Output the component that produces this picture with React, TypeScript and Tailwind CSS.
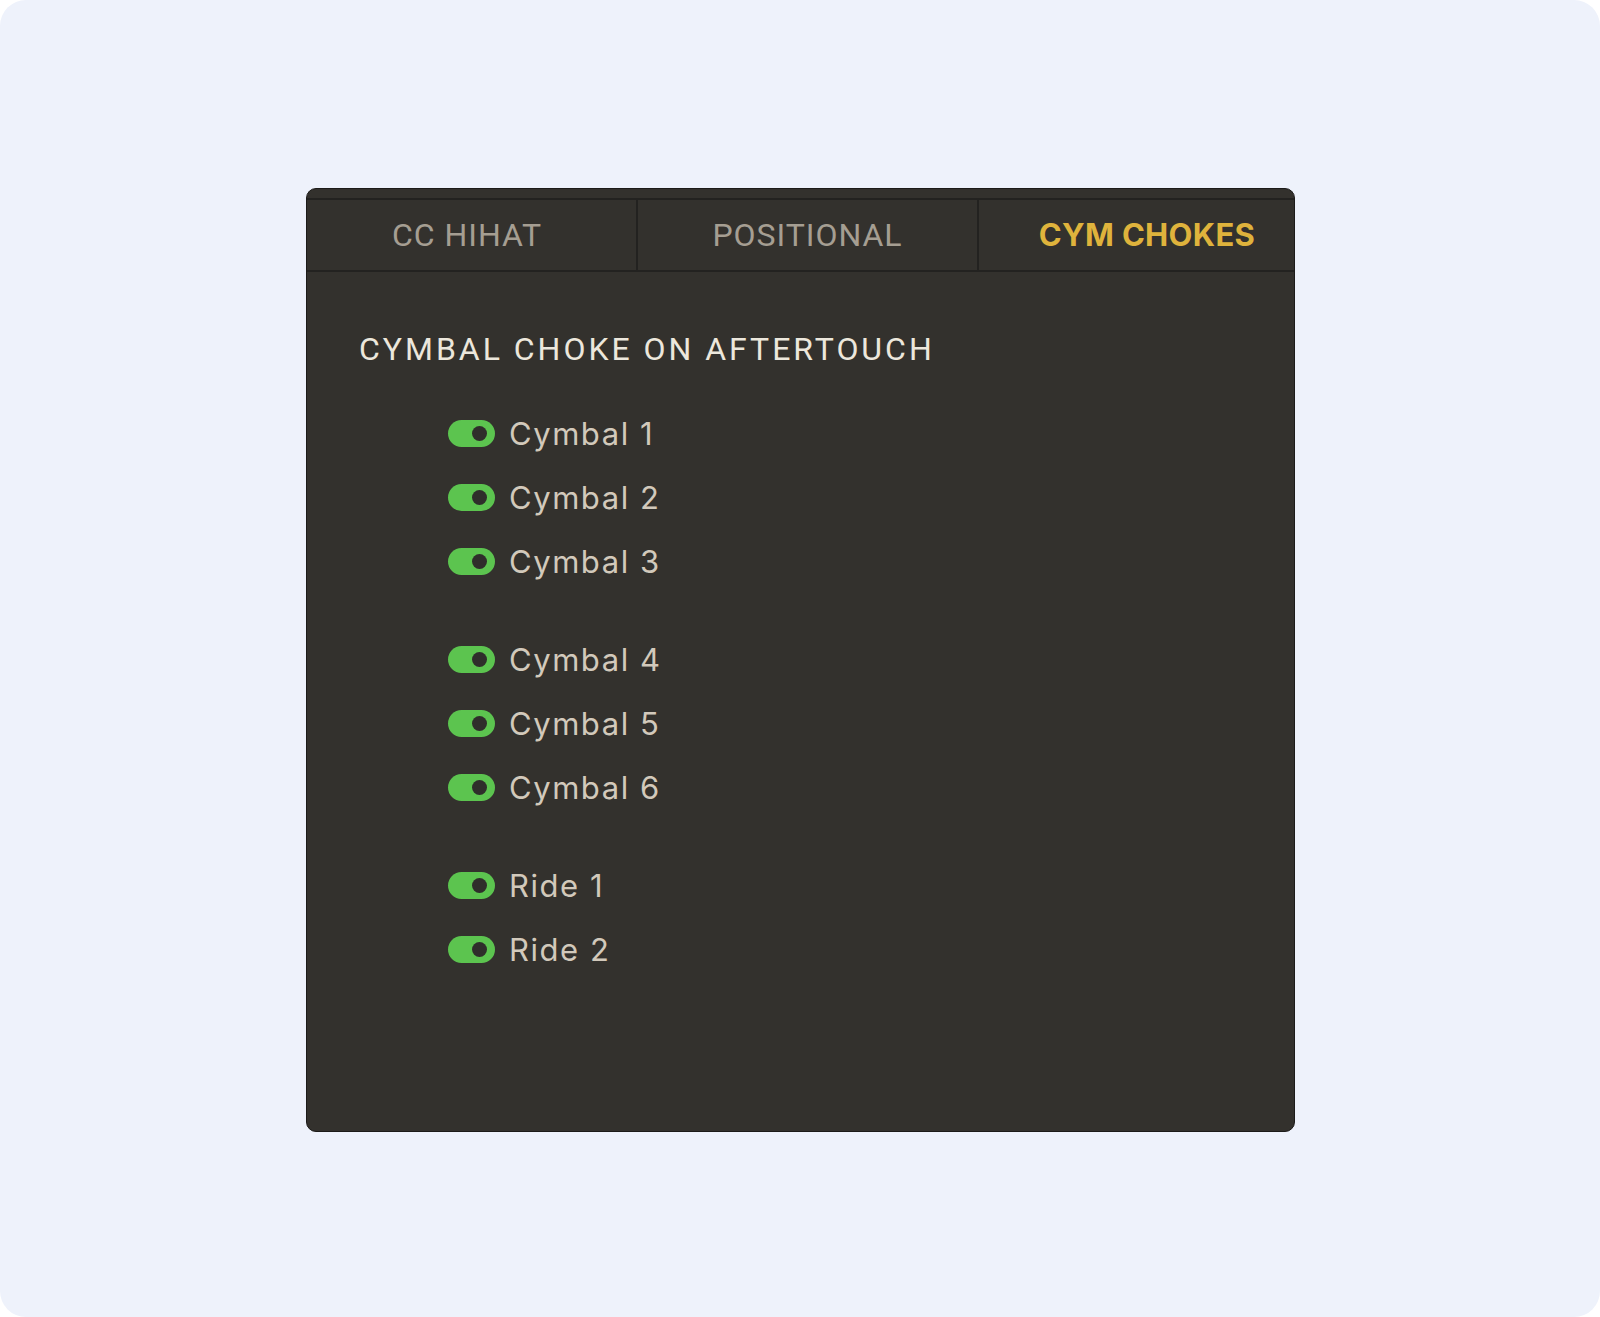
import React, { useState } from "react";

interface ChokeItem {
  id: string;
  label: string;
}

const groups: ChokeItem[][] = [
  [
    { id: "c1", label: "Cymbal 1" },
    { id: "c2", label: "Cymbal 2" },
    { id: "c3", label: "Cymbal 3" },
  ],
  [
    { id: "c4", label: "Cymbal 4" },
    { id: "c5", label: "Cymbal 5" },
    { id: "c6", label: "Cymbal 6" },
  ],
  [
    { id: "r1", label: "Ride 1" },
    { id: "r2", label: "Ride 2" },
  ],
];

const Toggle: React.FC<{ on: boolean; onClick: () => void }> = ({ on, onClick }) => (
  <button
    onClick={onClick}
    className={`relative h-[27px] w-[47px] shrink-0 rounded-full ${
      on ? "bg-[#5cc44f]" : "bg-[#5a5750]"
    }`}
  >
    <span
      className={`absolute top-[6px] h-[15px] w-[15px] rounded-full bg-[#2f2e2b] ${
        on ? "left-[24px]" : "left-[8px]"
      }`}
    />
  </button>
);

const App: React.FC = () => {
  const [tab, setTab] = useState("CYM CHOKES");
  const [enabled, setEnabled] = useState<Record<string, boolean>>({
    c1: true,
    c2: true,
    c3: true,
    c4: true,
    c5: true,
    c6: true,
    r1: true,
    r2: true,
  });

  const tabs = [
    { label: "CC HIHAT", cls: "w-[331px] pr-[9px]" },
    { label: "POSITIONAL", cls: "w-[341px]" },
    { label: "CYM CHOKES", cls: "flex-1 pl-[21px]" },
  ];

  return (
    <div className="h-[1317px] w-[1600px] bg-white">
      <div className="h-full w-full rounded-[26px] bg-[#eef2fb] pl-[306px] pt-[188px] font-['Inter',sans-serif]">
        <div className="flex h-[944px] w-[989px] flex-col rounded-[10px] border border-[#1c1b19] bg-[#33312d]">
          {/* Tabs */}
          <div className="mt-[9px] flex h-[74px] border-y-2 border-[#232220]">
            {tabs.map((t, i) => {
              const active = tab === t.label;
              return (
                <button
                  key={t.label}
                  onClick={() => setTab(t.label)}
                  className={`flex h-full items-center justify-center ${t.cls} ${
                    i < tabs.length - 1 ? "border-r-2 border-[#232220]" : ""
                  } ${
                    active
                      ? "font-['Inter',sans-serif] text-[31px] font-bold tracking-[0.01em] text-[#dfb33c]"
                      : "font-['Roboto',sans-serif] text-[32px] font-normal tracking-[0.03em] text-[#a59e92]"
                  }`}
                >
                  {t.label}
                </button>
              );
            })}
          </div>

          {/* Content */}
          <div className="px-[52px] pt-[59px]">
            <h2 className="font-['Roboto',sans-serif] text-[32px] leading-[36px] tracking-[0.093em] text-[#ece7dc]">
              CYMBAL CHOKE ON AFTERTOUCH
            </h2>

            <div className="mt-[34px] flex flex-col gap-[34px] pl-[89px]">
              {groups.map((group, gi) => (
                <div key={gi} className="flex flex-col">
                  {group.map((item) => (
                    <div key={item.id} className="flex h-[64px] items-center gap-[14px]">
                      <Toggle
                        on={enabled[item.id]}
                        onClick={() =>
                          setEnabled((e) => ({ ...e, [item.id]: !e[item.id] }))
                        }
                      />
                      <span className="text-[31px] leading-none tracking-[0.05em] text-[#d2c9bb]">
                        {item.label}
                      </span>
                    </div>
                  ))}
                </div>
              ))}
            </div>
          </div>
        </div>
      </div>
    </div>
  );
};

export default App;
